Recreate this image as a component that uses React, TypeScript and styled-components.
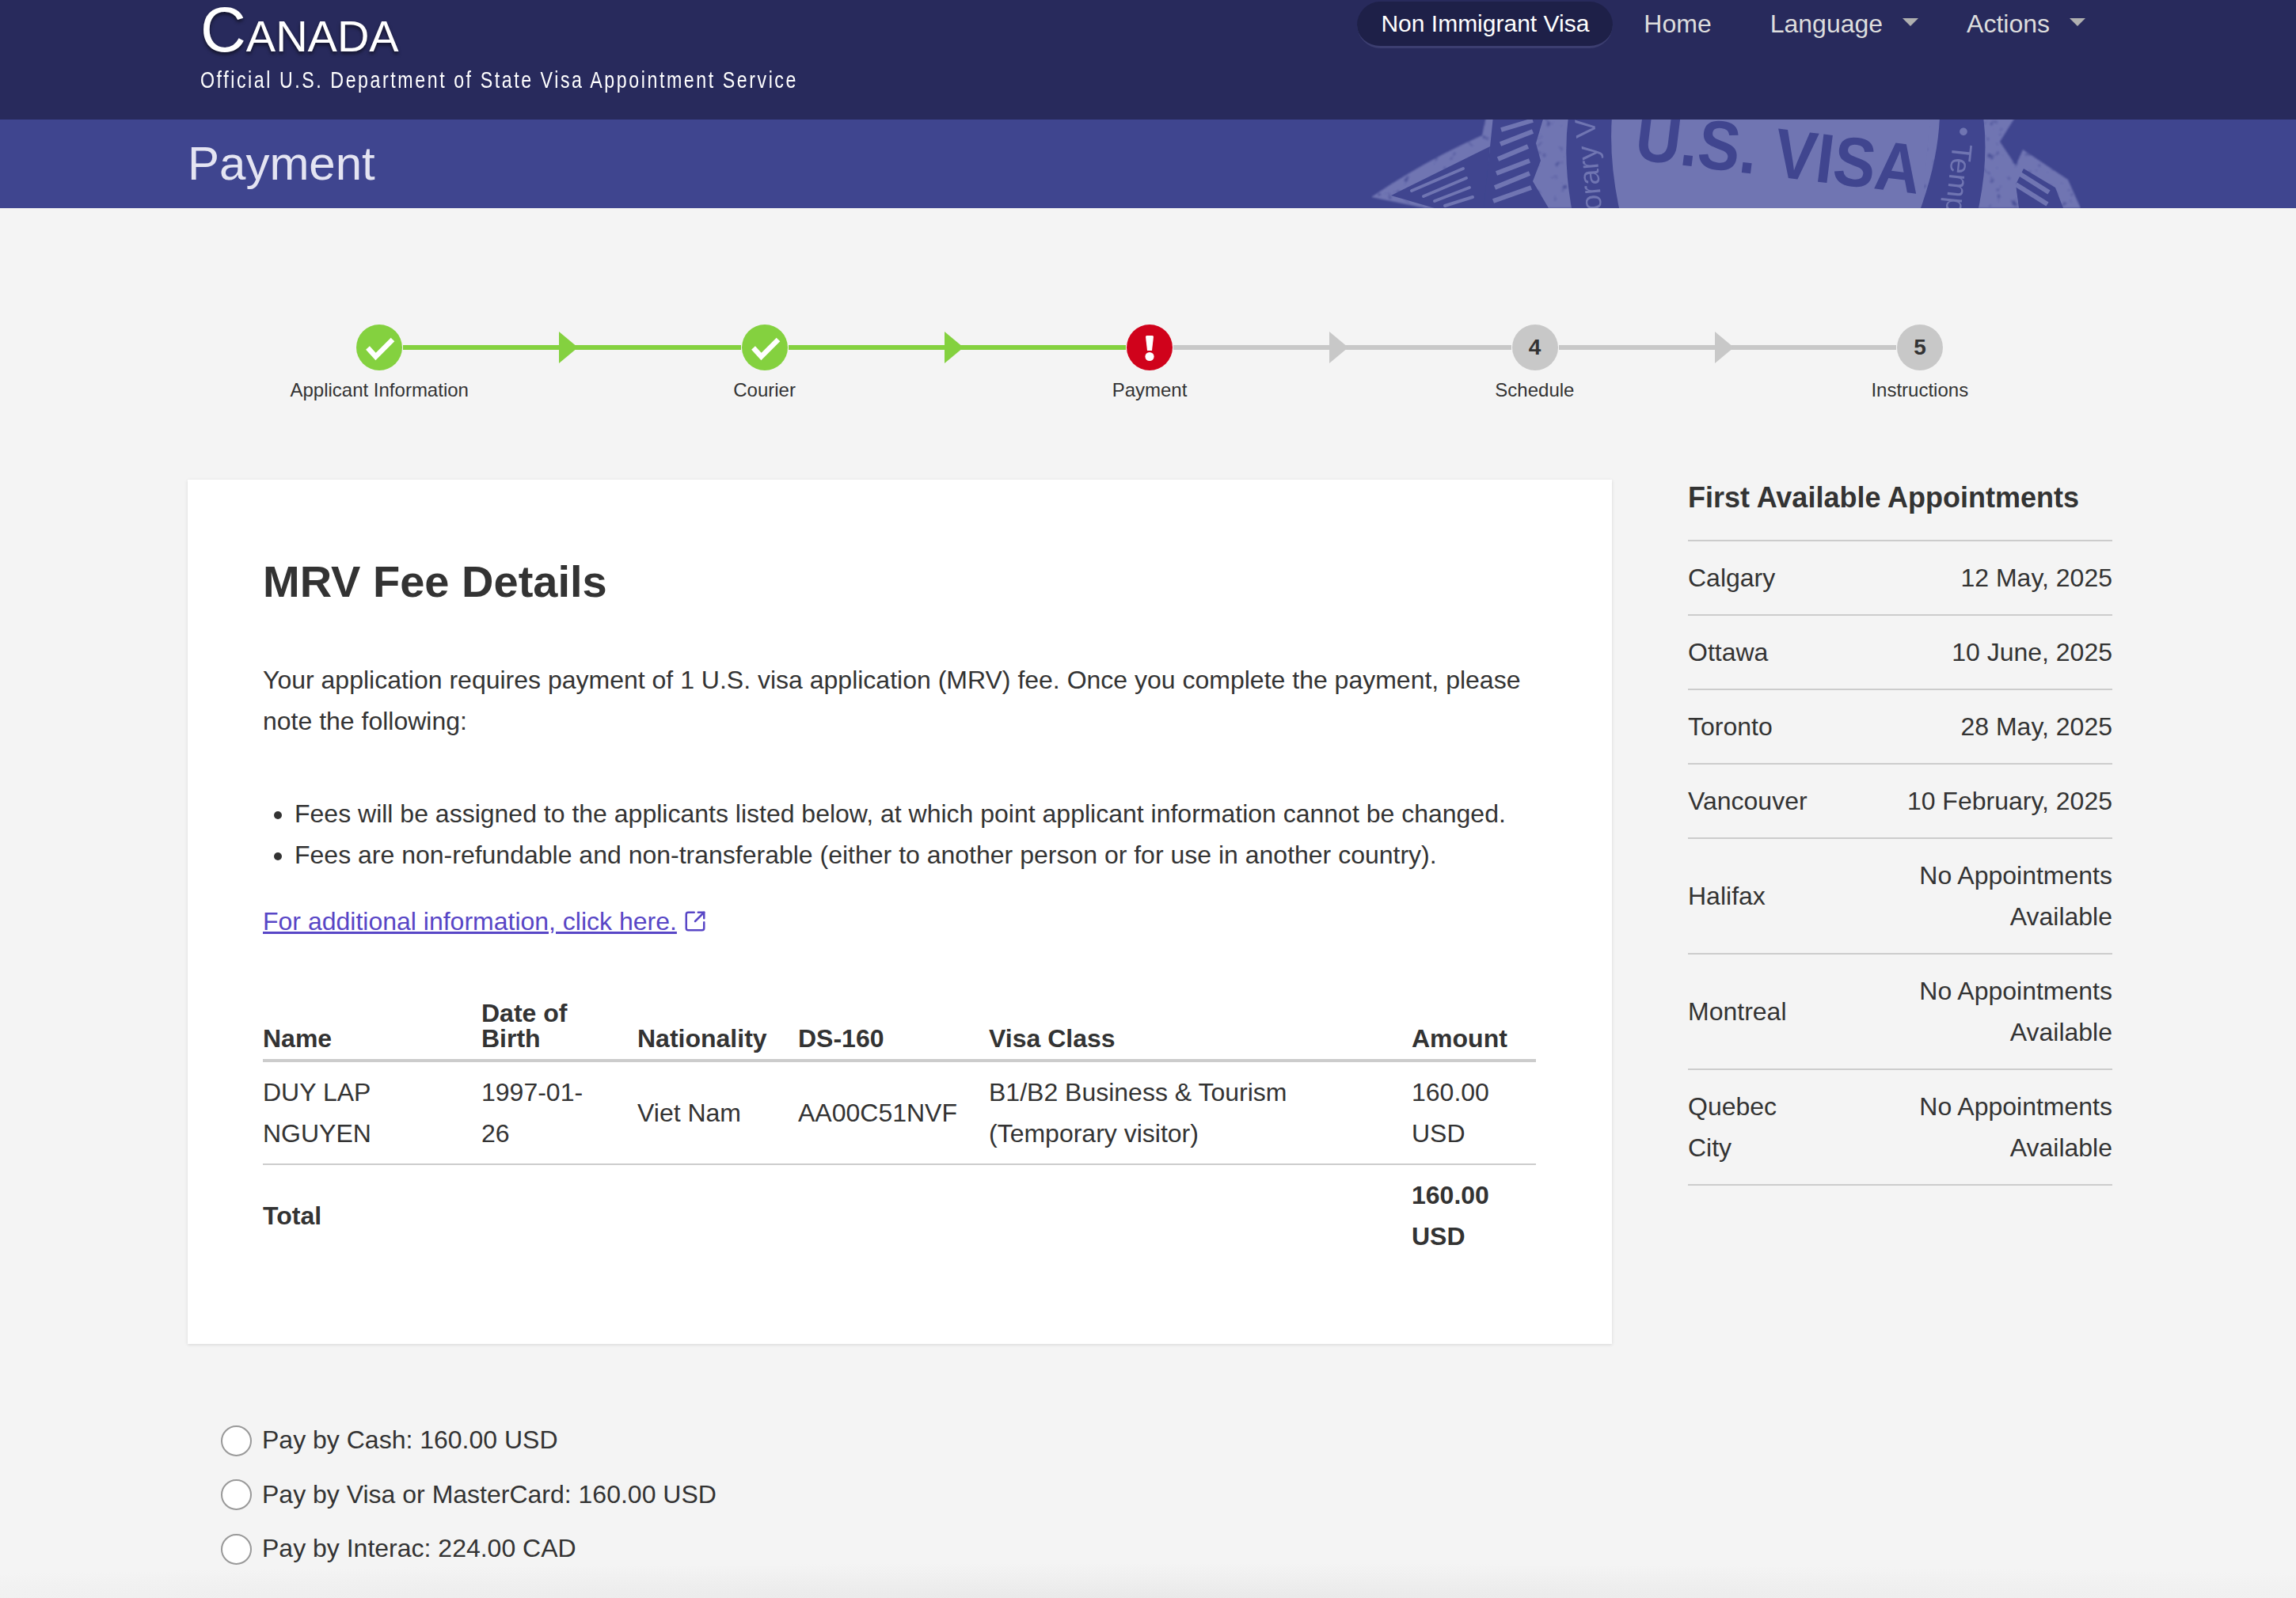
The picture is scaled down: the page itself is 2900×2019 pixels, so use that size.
import { Fragment } from "react";
import { createGlobalStyle, styled } from "styled-components";
import { SquareArrowOutUpRight } from "lucide-react";

const GlobalStyle = createGlobalStyle`
  html, body {
    margin: 0;
    height: 2019px;
    overflow: hidden;
    background: #f4f4f4;
    color: #333;
    font-family: "Liberation Sans", Arial, sans-serif;
    font-size: 32px;
    line-height: 52px;
  }
`;

const Page = styled.div`
  position: relative;
  height: 2019px;
  overflow: hidden;

  &::after {
    content: "";
    position: absolute;
    left: 0;
    right: 0;
    bottom: 0;
    height: 44px;
    background: radial-gradient(ellipse 70% 100% at 50% 100%, #e9e9e9, rgba(244, 244, 244, 0));
  }
`;

const Header = styled.header`
  display: flex;
  justify-content: space-between;
  height: 151px;
  padding: 0 247px 0 253px;
  box-sizing: border-box;
  background: #282a5c;
`;

const Brand = styled.div`
  color: #fff;
`;

const BrandName = styled.div`
  font-size: 80px;
  font-variant: small-caps;
  line-height: 76px;
  text-shadow: 0 3px 4px rgba(0, 0, 0, 0.55);
`;

/* the original uses a condensed face, squeezed here since none is installed */
const BrandTagline = styled.div`
  margin-top: 3px;
  font-size: 29px;
  line-height: 44px;
  letter-spacing: 3.2px;
  white-space: nowrap;
  transform: scaleX(0.8);
  transform-origin: left center;
`;

const Nav = styled.nav`
  display: flex;
  align-items: flex-start;
  gap: 10px;
  padding-top: 2px;
`;

const NavItem = styled.a<{ $active?: boolean }>`
  display: flex;
  align-items: center;
  height: 56px;
  margin-right: ${(p) => (p.$active ? "-3px" : "0")};
  padding: 0 ${(p) => (p.$active ? "30px" : "32px")};
  border-radius: 30px;
  font-size: ${(p) => (p.$active ? "30px" : "32px")};
  color: ${(p) => (p.$active ? "#fff" : "#ddd")};
  background: ${(p) => (p.$active ? "#1e2048" : "transparent")};
  border-bottom: 3px solid ${(p) => (p.$active ? "#3c3e70" : "transparent")};
  line-height: 56px;
`;

const Caret = styled.span`
  width: 0;
  height: 0;
  margin: -4px -13px 0 25px;
  border-left: 10px solid transparent;
  border-right: 10px solid transparent;
  border-top: 10px solid #b0b0b0;
`;

const TitleBar = styled.div`
  position: relative;
  height: 112px;
  padding-left: 237px;
  overflow: hidden;
  background: #3f458f;
`;

const PageTitle = styled.h1`
  margin: 0;
  font-size: 60px;
  font-weight: 400;
  line-height: 112px;
  color: #e4e4f2;
`;

const Seal = styled.svg`
  position: absolute;
  top: 0;
  left: 1700px;
`;

const Main = styled.main`
  width: 2432px;
  margin-left: 237px;
  padding-top: 147px;
`;

const StepTrack = styled.div`
  display: flex;
  align-items: center;
  padding: 0 215px 0 213px;
`;

const Circle = styled.div<{ $color: string }>`
  display: flex;
  flex: none;
  align-items: center;
  justify-content: center;
  width: 58px;
  height: 58px;
  border-radius: 50%;
  background: ${(p) => p.$color};
  font-size: 28px;
  font-weight: 700;
`;

const Connector = styled.div<{ $color: string }>`
  position: relative;
  flex: 1;
  height: 6px;
  margin: 0 1px;
  background: ${(p) => p.$color};

  &::after {
    content: "";
    position: absolute;
    top: -17px;
    left: calc(50% - 16px);
    border-left: 24px solid ${(p) => p.$color};
    border-top: 20px solid transparent;
    border-bottom: 20px solid transparent;
  }
`;

const StepLabels = styled.div`
  display: grid;
  grid-template-columns: repeat(5, 1fr);
  margin: 1px 1px 0 -1px;
`;

const StepLabel = styled.div`
  font-size: 24px;
  line-height: 48px;
  text-align: center;
`;

const Columns = styled.div`
  display: flex;
  gap: 95px;
  margin-top: 89px;
`;

const Card = styled.section`
  width: 1799px;
  margin-right: 1px;
  padding: 96px 96px 98px 95px;
  box-sizing: border-box;
  background: #fff;
  box-shadow: 0 1px 4px rgba(0, 0, 0, 0.12);
`;

const CardTitle = styled.h2`
  margin: 0 0 65px;
  font-size: 56px;
  line-height: 66px;
`;

const Intro = styled.p`
  margin: 0 0 65px;
`;

const Notes = styled.ul`
  margin: 0 0 32px;
  padding-left: 40px;
`;

const MoreLink = styled.a`
  display: inline-flex;
  align-items: center;
  gap: 8px;
  color: #5846c6;
  text-decoration: underline;

  svg {
    flex: none;
  }
`;

const FeeTable = styled.table`
  width: 100%;
  margin-top: 74px;
  border-collapse: collapse;
  table-layout: fixed;
`;

const Head = styled.th<{ $width: number }>`
  box-sizing: border-box;
  width: ${(p) => p.$width}px;
  padding: 0 40px 10px 0;
  border-bottom: 4px solid #ccc;
  font-size: 32px;
  line-height: 32px;
  text-align: left;
  vertical-align: bottom;
`;

const Cell = styled.td<{ $bold?: boolean }>`
  padding: 12px 40px 12px 0;
  font-weight: ${(p) => (p.$bold ? 700 : 400)};
`;

const AmountCell = styled(Cell)`
  padding-right: 0;
`;

const AmountHead = styled(Head)`
  padding-right: 0;
`;

const FeeRow = styled.tr`
  border-bottom: 2px solid #ccc;
`;

const Sidebar = styled.aside`
  width: 536px;
`;

const SidebarTitle = styled.h3`
  margin: 0 0 30px;
  font-size: 36px;
  line-height: 46px;
`;

const Slot = styled.div`
  display: grid;
  grid-template-columns: 164px 1fr;
  align-items: center;
  padding: 20px 0;
  border-top: 2px solid #ccc;

  &:last-child {
    border-bottom: 2px solid #ccc;
  }
`;

const SlotDate = styled.div`
  text-align: right;
`;

const PayOptions = styled.div`
  display: flex;
  flex-direction: column;
  gap: 16.5px;
  margin-top: 95px;
  padding-left: 42px;
`;

const PayOption = styled.label`
  display: flex;
  align-items: center;
  gap: 13px;
`;

const Radio = styled.input`
  width: 39px;
  height: 39px;
  margin: 2px 0 0;
  appearance: none;
  border: 2px solid #999;
  border-radius: 50%;
  background: #fff;
`;

const CheckMark = () => (
  <svg width="58" height="58" viewBox="0 0 58 58">
    <path d="M14.5 29.5 L24.5 40.5 L46 19" fill="none" stroke="#fff" strokeWidth="6.5" />
  </svg>
);

const AlertMark = () => (
  <svg width="58" height="58" viewBox="0 0 58 58">
    <path d="M24 15.5 a1.5 1.5 0 0 1 1.5-1.5 h7 a1.5 1.5 0 0 1 1.5 1.5 L32 33 h-6 Z" fill="#fff" />
    <circle cx="29" cy="40.5" r="5.6" fill="#fff" />
  </svg>
);

const SealDrawing = () => (
  <Seal width="1000" height="112" viewBox="0 0 1000 112">
    <defs>
      <filter id="worn" x="0" y="0" width="100%" height="100%">
        <feTurbulence type="fractalNoise" baseFrequency="0.1" numOctaves="2" seed="4" result="noise" />
        <feColorMatrix in="noise" type="matrix" values="0 0 0 0 0 0 0 0 0 0 0 0 0 0 0 0 0 0 -4 3.6" result="holes" />
        <feComposite in="SourceGraphic" in2="holes" operator="in" />
        <feGaussianBlur stdDeviation="1" />
      </filter>
      <filter id="soft">
        <feGaussianBlur stdDeviation="0.7" />
      </filter>
    </defs>
    <g filter="url(#worn)" fill="#7075b2">
      <path d="M32 98 Q100 52 172 20 L177 -4 H846 L826 28 L846 58 L855 38 L912 76 L928 112 H100 Z" />
    </g>
    <g filter="url(#soft)">
      <path d="M365 -4 H738 L728 112 H345 Q332 50 336 -4 Z" fill="#7075b2" />
      <path d="M57 96 L182 34 L176 112 H112 Z" fill="#3f458f" />
      <g stroke="#7075b2" strokeWidth="4" strokeLinecap="round">
        <path d="M83 90 L148 62" />
        <path d="M98 97 L152 74" />
        <path d="M112 103 L156 86" />
        <path d="M125 109 L160 98" />
      </g>
      <path d="M186 -4 H250 L240 30 L246 52 L236 78 L256 112 H174 Z" fill="#3f458f" />
      <g stroke="#7075b2" strokeWidth="6">
        <path d="M196 13 L236 1" />
        <path d="M195 31 L236 15" />
        <path d="M192 50 L230 34" />
        <path d="M190 68 L232 52" />
        <path d="M188 86 L232 68" />
        <path d="M186 103 L234 86" />
      </g>
      <path d="M281 -4 H336 Q332 50 345 112 H285 Q274 50 281 -4 Z" fill="#3f458f" />
      <path d="M750 -4 H805 Q812 50 799 112 H726 Q748 50 750 -4 Z" fill="#3f458f" />
      <path d="M856 62 L896 86 L906 112 H850 L846 82 Z" fill="#3f458f" />
      <g stroke="#7075b2" strokeWidth="6">
        <path d="M850 68 L888 92" />
        <path d="M846 82 L886 107" />
      </g>
      <g fill="#3f458f" fontFamily="'Liberation Sans', Arial, sans-serif" fontWeight="700" fontSize="88">
        <text transform="translate(363 50) rotate(7)" textLength="362" lengthAdjust="spacingAndGlyphs">
          U.S. VISA
        </text>
      </g>
      <g fill="#7075b2" fontFamily="'Liberation Sans', Arial, sans-serif" fontSize="36">
        <text transform="translate(323 114) rotate(-94.5)">orary V</text>
        <text transform="translate(772 -22) rotate(96)">a • Temp</text>
      </g>
    </g>
  </Seal>
);

const steps = [
  { label: "Applicant Information", color: "#84d13f", mark: <CheckMark /> },
  { label: "Courier", color: "#84d13f", mark: <CheckMark /> },
  { label: "Payment", color: "#d0021b", mark: <AlertMark /> },
  { label: "Schedule", color: "#c8c8c8", mark: "4" },
  { label: "Instructions", color: "#c8c8c8", mark: "5" },
];

const slots = [
  { city: "Calgary", date: "12 May, 2025" },
  { city: "Ottawa", date: "10 June, 2025" },
  { city: "Toronto", date: "28 May, 2025" },
  { city: "Vancouver", date: "10 February, 2025" },
  { city: "Halifax", date: "No Appointments Available" },
  { city: "Montreal", date: "No Appointments Available" },
  { city: "Quebec City", date: "No Appointments Available" },
];

const App = () => {
  return (
    <Page>
      <GlobalStyle />
      <Header>
        <Brand>
          <BrandName>Canada</BrandName>
          <BrandTagline>Official U.S. Department of State Visa Appointment Service</BrandTagline>
        </Brand>
        <Nav>
          <NavItem $active>Non Immigrant Visa</NavItem>
          <NavItem>Home</NavItem>
          <NavItem>
            Language
            <Caret />
          </NavItem>
          <NavItem>
            Actions
            <Caret />
          </NavItem>
        </Nav>
      </Header>
      <TitleBar>
        <PageTitle>Payment</PageTitle>
        <SealDrawing />
      </TitleBar>
      <Main>
        <StepTrack>
          {steps.map((step, i) => (
            <Fragment key={step.label}>
              <Circle $color={step.color}>{step.mark}</Circle>
              {i < steps.length - 1 && <Connector $color={i < 2 ? "#84d13f" : "#c8c8c8"} />}
            </Fragment>
          ))}
        </StepTrack>
        <StepLabels>
          {steps.map((step) => (
            <StepLabel key={step.label}>{step.label}</StepLabel>
          ))}
        </StepLabels>
        <Columns>
          <Card>
            <CardTitle>MRV Fee Details</CardTitle>
            <Intro>
              Your application requires payment of 1 U.S. visa application (MRV) fee. Once you complete the payment,
              please note the following:
            </Intro>
            <Notes>
              <li>Fees will be assigned to the applicants listed below, at which point applicant information cannot be changed.</li>
              <li>Fees are non-refundable and non-transferable (either to another person or for use in another country).</li>
            </Notes>
            <MoreLink>
              For additional information, click here.
              <SquareArrowOutUpRight size={30} strokeWidth={2} />
            </MoreLink>
            <FeeTable>
              <thead>
                <tr>
                  <Head $width={276}>Name</Head>
                  <Head $width={197}>Date of Birth</Head>
                  <Head $width={203}>Nationality</Head>
                  <Head $width={241}>DS-160</Head>
                  <Head $width={534}>Visa Class</Head>
                  <AmountHead $width={157}>Amount</AmountHead>
                </tr>
              </thead>
              <tbody>
                <FeeRow>
                  <Cell>DUY LAP NGUYEN</Cell>
                  <Cell>1997-01-26</Cell>
                  <Cell>Viet Nam</Cell>
                  <Cell>AA00C51NVF</Cell>
                  <Cell>B1/B2 Business &amp; Tourism (Temporary visitor)</Cell>
                  <AmountCell>160.00 USD</AmountCell>
                </FeeRow>
                <tr>
                  <Cell $bold colSpan={5}>
                    Total
                  </Cell>
                  <AmountCell $bold>160.00 USD</AmountCell>
                </tr>
              </tbody>
            </FeeTable>
          </Card>
          <Sidebar>
            <SidebarTitle>First Available Appointments</SidebarTitle>
            {slots.map((slot) => (
              <Slot key={slot.city}>
                <div>{slot.city}</div>
                <SlotDate>{slot.date}</SlotDate>
              </Slot>
            ))}
          </Sidebar>
        </Columns>
        <PayOptions>
          <PayOption>
            <Radio type="radio" name="pay" />
            Pay by Cash: 160.00 USD
          </PayOption>
          <PayOption>
            <Radio type="radio" name="pay" />
            Pay by Visa or MasterCard: 160.00 USD
          </PayOption>
          <PayOption>
            <Radio type="radio" name="pay" />
            Pay by Interac: 224.00 CAD
          </PayOption>
        </PayOptions>
      </Main>
    </Page>
  );
};

export default App;
